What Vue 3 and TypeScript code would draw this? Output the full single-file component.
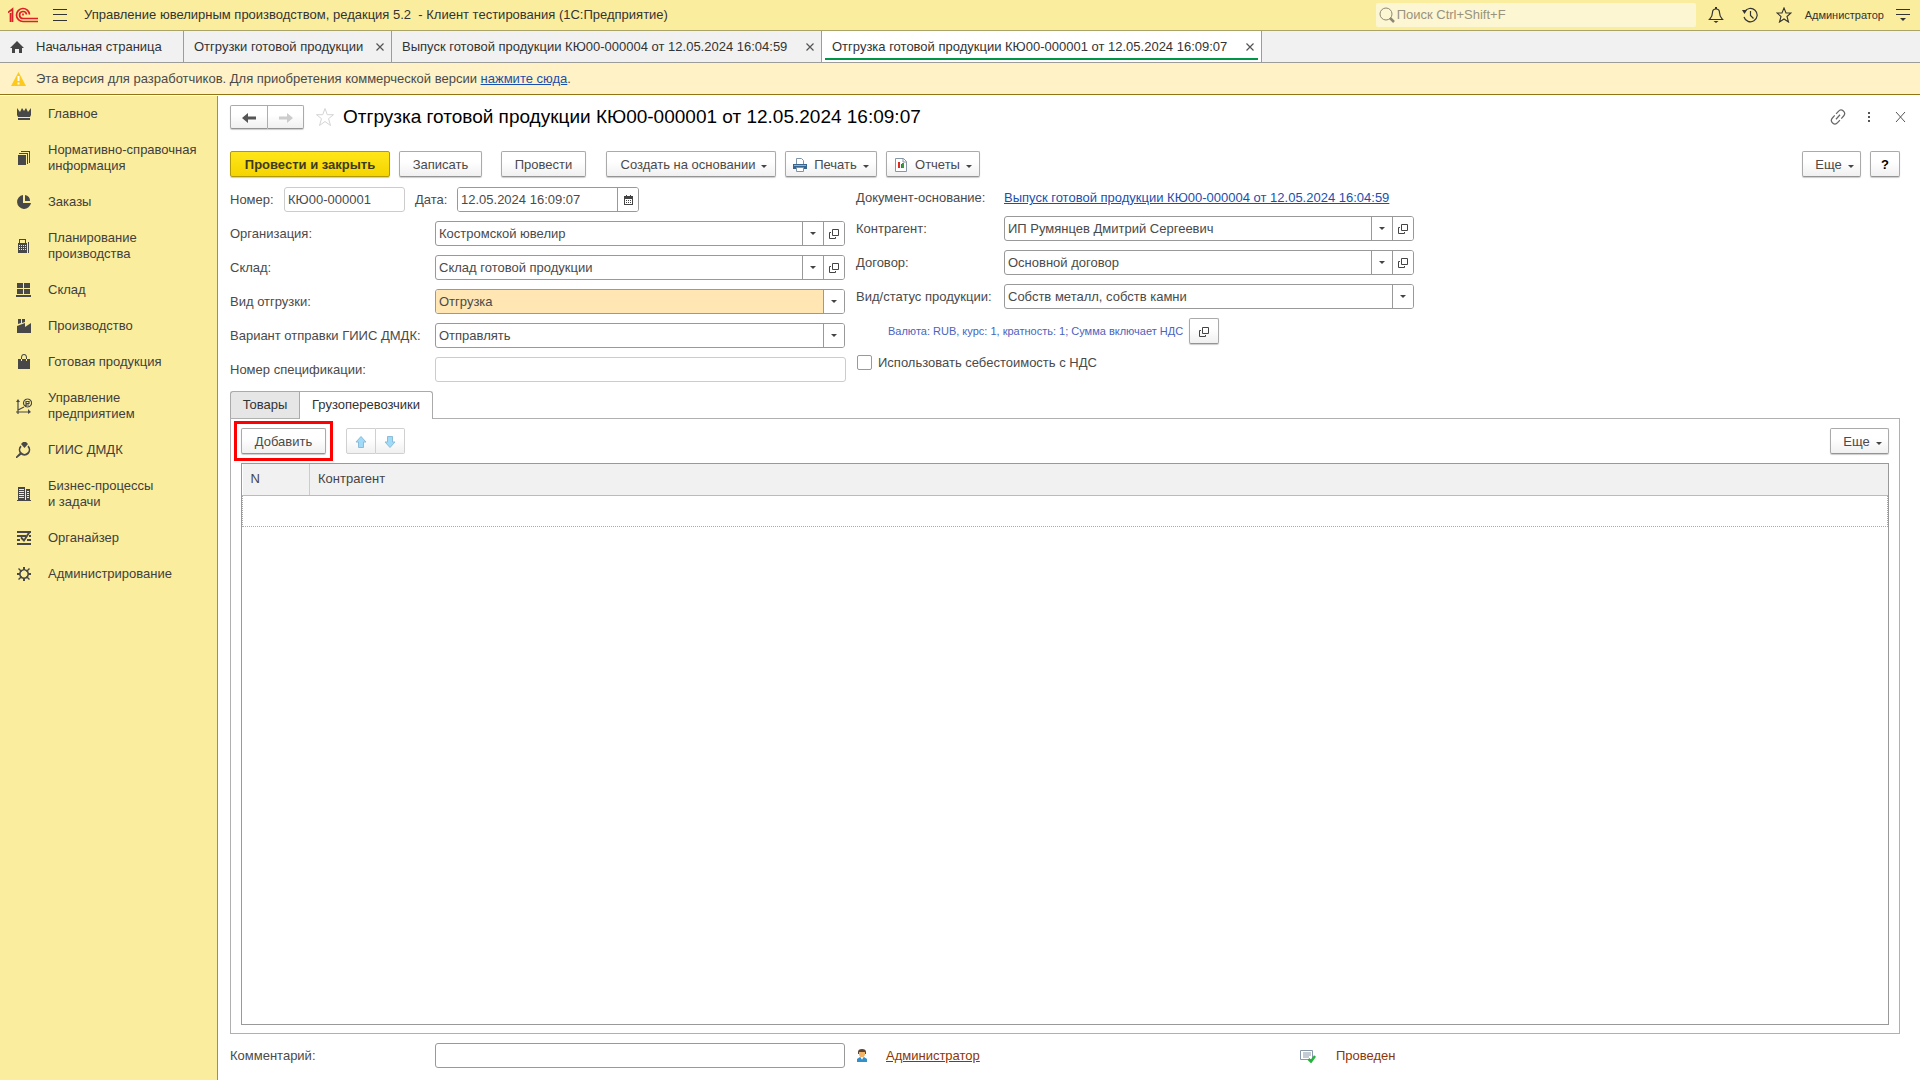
<script setup lang="ts">
import { ref } from 'vue'

interface Section {
  title: string
  fill?: string
  line?: string
}

const sections: Section[] = [
  { title: 'Главное', fill: 'M1 2l3 4 2-4 2 3 2-3 2 4 3-4v7l-1 2H2L1 9zM2 12h12v2H2z' },
  { title: 'Нормативно-справочная\nинформация', fill: 'M2 5h8v10H2zM3 3h9v11h-1V4H3zM5 1h9v12h-1V2H5z' },
  { title: 'Заказы', fill: 'M7 1a7 7 0 1 0 8 8H7zM9 1a6 6 0 0 1 5 6H9z' },
  {
    title: 'Планирование\nпроизводства',
    fill: 'M3 1h7v4h1v10H2V5h1zm1 1v3h5V2zM3 7v1h1V7zm2 0v1h1V7zm2 0v1h1V7zm2 0v1h1V7zM3 9v1h1V9zm2 0v1h1V9zm2 0v1h1V9zm2 0v1h1V9zM3 11v1h1v-1zm2 0v1h1v-1zm2 0v1h1v-1zm2 0v1h1v-1zM12 4h1v11h-1z',
  },
  { title: 'Склад', fill: 'M1 1h6v5H1zM8 1h6v5H8zM1 7h6v5H1zM8 7h6v5H8zM0 13h15v2H0z' },
  { title: 'Производство', fill: 'M2 1h3v4l-3 1zM6 1h3v3L6 5zM1 8l8-3v4l6-4v10H1z' },
  { title: 'Готовая продукция', fill: 'M2 5h12v10H2zM5 4a3 4 0 0 1 6 0v3h-1V4a2 3 0 0 0-4 0v3H5z' },
  {
    title: 'Управление\nпредприятием',
    fill: 'M0 4l2-3 2 3zM12 11l3 3-3 2z',
    line: 'M2 3v11h11M0 14h2v2M2 12l6-3M11.500 1a4 4 0 1 0 .1 0M10 3v5M10 3.500h3v2h-3M10 7h3',
  },
  { title: 'ГИИС ДМДК', fill: 'M5 2l2-2h3l2 2-3.500 4z', line: 'M5 4a5.200 5.200 0 1 0 7 0M5 4.500a4.700 4.700 0 1 0 7 0M5 12l-5 4M4 11.500l-4 4' },
  {
    title: 'Бизнес-процессы\nи задачи',
    fill: 'M2 1h7v13H2zm1 2v1h5V3zm0 2v1h5V5zm0 2v1h5V7zm0 2v1h5V9zm0 2v1h5v-1zM10 3h4v11h-4zm1 2v1h2V5zm0 2v1h2V7zm0 2v1h2V9zm0 2v1h2v-1zM1 14h14v1H1z',
  },
  {
    title: 'Органайзер',
    fill: 'M1 1h14v2H1zM1 5h9v2H1zM13 5h2v2h-2zM1 9h3v2H1zM11 9h4v2h-4zM1 13h14v2H1z',
    line: 'M14 2l-6 9-3-3M13 2l-5 8-3-3',
  },
  {
    title: 'Администрирование',
    fill: 'M7 1h2v3H7zM7 12h2v3H7zM1 7h3v2H1zM12 7h3v2h-3zM2 3l1-1 3 3-1 1zM13 2l1 1-3 3-1-1zM2 13l1 1 3-3-1-1zM14 13l-1 1-3-3 1-1z',
    line: 'M8 3.500a4.500 4.500 0 1 0 .1 0M8 4a4 4 0 1 0 .1 0',
  },
]

const windows = ref([
  { title: 'Отгрузки готовой продукции', width: 208, active: false },
  { title: 'Выпуск готовой продукции КЮ00-000004 от 12.05.2024 16:04:59', width: 430, active: false },
  { title: 'Отгрузка готовой продукции КЮ00-000001 от 12.05.2024 16:09:07', width: 440, active: true },
])

const leftFields = [
  { id: 'org', label: 'Организация:', value: 'Костромской ювелир', open: true, mark: false },
  { id: 'store', label: 'Склад:', value: 'Склад готовой продукции', open: true, mark: false },
  { id: 'kind', label: 'Вид отгрузки:', value: 'Отгрузка', open: false, mark: true },
  { id: 'giis', label: 'Вариант отправки ГИИС ДМДК:', value: 'Отправлять', open: false, mark: false },
]
const rightFields = [
  { id: 'partner', label: 'Контрагент:', value: 'ИП Румянцев Дмитрий Сергеевич', open: true },
  { id: 'contract', label: 'Договор:', value: 'Основной договор', open: true },
  { id: 'status', label: 'Вид/статус продукции:', value: 'Собств металл, собств камни', open: false },
]

const docNumber = ref('КЮ00-000001')
const docDate = ref('12.05.2024 16:09:07')
const spec = ref('')
const comment = ref('')
const withVat = ref(false)
</script>

<template>
  <div class="app">
    <header class="topbar">
      <svg class="logo" viewBox="0 0 30 16" width="30" height="16" aria-label="1С">
        <path d="M0 5.500L4.500 2v13M2.500 6v9M21.500 7.500A6.500 6.500 0 1 0 15 14.500H30M18.500 7.500A3.500 3.500 0 1 0 15 11.500H30M15 8.500v-2" fill="none" stroke="#dd1f26" stroke-width="1.700" />
      </svg>
      <button class="flat burger" aria-label="Меню">
        <svg viewBox="0 0 14 12" width="14" height="12"><path d="M0 .5h14M0 5.500h14M0 11.500h14" stroke="#333" /></svg>
      </button>
      <span class="apptitle">Управление ювелирным производством, редакция 5.2&nbsp; - Клиент тестирования (1С:Предприятие)</span>
      <label class="search">
        <svg viewBox="0 0 16 16" width="16" height="16"><circle cx="7" cy="7" r="6" fill="none" stroke="#8d8874" /><path d="M11 11l4 4" stroke="#8d8874" stroke-width="2.500" /></svg>
        <input type="search" placeholder="Поиск Ctrl+Shift+F" aria-label="Поиск" />
      </label>
      <nav class="tools">
        <button class="flat" aria-label="Оповещения">
          <svg viewBox="0 0 16 16" width="16" height="16"><path d="M1.500 12.500h13c-2-2-3-3-3-7a3.500 3.500 0 0 0-7 0c0 4-1 5-3 7z" fill="none" stroke="#333" stroke-width="1.200" /><path d="M5.500 14h5L8 16zM7 0h2v2H7z" fill="#333" /></svg>
        </button>
        <button class="flat" aria-label="История">
          <svg viewBox="0 0 16 16" width="16" height="16"><path d="M2.500 5a6.700 6.700 0 1 1-.5 5M8.500 4v4.500l3 3" fill="none" stroke="#333" stroke-width="1.200" /><path d="M0 3h5L2.500 7z" fill="#333" /></svg>
        </button>
        <button class="flat" aria-label="Избранное">
          <svg viewBox="0 0 16 16" width="16" height="16"><path d="M8 1l2 5h5l-4 3.500 1.500 5.500L8 12l-4.500 3L5 9.500 1 6h5z" fill="none" stroke="#333" stroke-width="1.100" /></svg>
        </button>
      </nav>
      <span class="user">Администратор</span>
      <button class="flat panelmenu" aria-label="Настройки">
        <svg viewBox="0 0 14 14" width="14" height="14"><path d="M0 1.500h14M0 6.500h14" stroke="#333" /><path d="M4 10h6l-3 3z" fill="#333" /></svg>
      </button>
    </header>

    <nav class="windows">
      <a class="win home" href="#">
        <svg viewBox="0 0 14 12" width="14" height="12"><path d="M7 0l7 7h-2v5H9V8H5v4H2V7H0z" fill="#444" /></svg>
        <span>Начальная страница</span>
      </a>
      <div v-for="w in windows" :key="w.title" class="win" :class="{ active: w.active }" :style="{ minWidth: w.width + 'px' }">
        <a href="#">{{ w.title }}</a>
        <button class="flat" aria-label="Закрыть">
          <svg viewBox="0 0 8 8" width="8" height="8"><path d="M.5.5l7 7M7.500.5l-7 7" stroke="#555" stroke-width="1.200" /></svg>
        </button>
      </div>
    </nav>

    <div class="banner">
      <svg viewBox="0 0 15 14" width="15" height="14"><path d="M7.500 0L15 14H0z" fill="#fcc91c" /><path d="M6.500 4h2v5h-2zM6.500 10.500h2v2h-2z" fill="#fff" /></svg>
      <span>Эта версия для разработчиков. Для приобретения коммерческой версии <a href="#">нажмите сюда</a>.</span>
    </div>

    <div class="body">
      <nav class="sidebar">
        <a v-for="s in sections" :key="s.title" href="#">
          <svg viewBox="0 0 16 16" width="16" height="16">
            <path v-if="s.fill" :d="s.fill" fill="#484848" fill-rule="evenodd" />
            <path v-if="s.line" :d="s.line" fill="none" stroke="#484848" stroke-width="1.200" />
          </svg>
          <span>{{ s.title }}</span>
        </a>
      </nav>

      <main class="doc">
        <div class="dochead">
          <div class="group">
            <button class="btn back" aria-label="Назад">
              <svg viewBox="0 0 14 10" width="14" height="10"><path d="M0 5l6-5v3.500h8v3H6V10z" fill="#555" /></svg>
            </button>
            <button class="btn forward" aria-label="Вперед">
              <svg viewBox="0 0 14 10" width="14" height="10"><path d="M14 5L8 0v3.500H0v3h8V10z" fill="#ccc" /></svg>
            </button>
          </div>
          <button class="flat fav" aria-label="В избранное">
            <svg viewBox="0 0 20 20" width="20" height="20"><path d="M10 1.500l2.300 6.200h6.200l-5 4 2 6.800-5.500-4-5.500 4 2-6.800-5-4h6.200z" fill="none" stroke="#d4d4d4" /></svg>
          </button>
          <h1>Отгрузка готовой продукции КЮ00-000001 от 12.05.2024 16:09:07</h1>
          <div class="corner">
            <button class="flat" aria-label="Ссылка">
              <svg viewBox="0 0 16 16" width="16" height="16"><g fill="none" stroke="#666" stroke-width="1.200" transform="rotate(-48 8 8)"><path d="M7 4.500H3.500a3.500 3.500 0 0 0 0 7H7M9 4.500h3.500a3.500 3.500 0 0 1 0 7H9M5 8h6" /></g></svg>
            </button>
            <button class="flat" aria-label="Действия">
              <svg viewBox="0 0 16 16" width="16" height="16"><path d="M7 3h2v2H7zM7 7h2v2H7zM7 11h2v2H7z" fill="#555" /></svg>
            </button>
            <button class="flat" aria-label="Закрыть">
              <svg viewBox="0 0 16 16" width="16" height="16"><path d="M4 3l9 10M13 3L4 13" stroke="#555" /></svg>
            </button>
          </div>
        </div>

        <div class="toolbar">
          <button class="btn primary">Провести и закрыть</button>
          <button class="btn save">Записать</button>
          <button class="btn post">Провести</button>
          <button class="btn create">Создать на основании<i class="caret"></i></button>
          <button class="btn print">
            <svg viewBox="0 0 14 14" width="14" height="14"><path d="M3.500 6V.5h5l2 2V6" fill="#fff" stroke="#7d93a8" /><path d="M0 6h14v5H0z" fill="#386490" /><path d="M1 7h12v1H1z" fill="#8fb2d2" /><path d="M3.500 9.500h7v4h-7z" fill="#fff" stroke="#7d93a8" /></svg>
            Печать<i class="caret"></i>
          </button>
          <button class="btn reports">
            <svg viewBox="0 0 14 14" width="14" height="14"><path d="M1.500.5h8l3 3v10h-11z" fill="#fff" stroke="#8596a6" /><path d="M9 .5V4h3.500" fill="none" stroke="#8596a6" /><path d="M4 4h2v6H4zM7 6h1v4H7z" fill="#e02b20" /><path d="M8 5h2v5H8z" fill="#3a9a3c" /></svg>
            Отчеты<i class="caret"></i>
          </button>
          <button class="btn more push">Еще<i class="caret"></i></button>
          <button class="btn help" aria-label="Справка">?</button>
        </div>

        <div class="fields">
          <div class="column">
            <div class="numbers">
              <label for="num">Номер:</label>
              <input id="num" v-model="docNumber" class="text pale" type="text" />
              <label for="date">Дата:</label>
              <div class="datebox">
                <input id="date" v-model="docDate" type="text" />
                <button class="cell" aria-label="Календарь">
                  <svg viewBox="0 0 9 10" width="9" height="10"><path d="M0 1h9v9H0zm1 3v5h7V4z" fill="#444" fill-rule="evenodd" /><path d="M2 0h1v2H2zM6 0h1v2H6zM2 5h1v1H2zM4 5h1v1H4zM6 5h1v1H6zM2 7h1v1H2zM4 7h1v1H4zM6 7h1v1H6z" fill="#444" /></svg>
                </button>
              </div>
            </div>
            <div v-for="f in leftFields" :key="f.id" class="row">
              <label :for="f.id">{{ f.label }}</label>
              <div class="combo" :class="{ mark: f.mark }">
                <select :id="f.id"><option>{{ f.value }}</option></select>
                <span class="cell drop"><i class="caret"></i></span>
                <button v-if="f.open" class="cell" aria-label="Открыть">
                  <svg viewBox="0 0 10 10" width="10" height="10"><path d="M3.500.5h6v6h-6zM2 3.500H.5v6h6V8" fill="none" stroke="#444" /></svg>
                </button>
              </div>
            </div>
            <div class="row">
              <label for="spec">Номер спецификации:</label>
              <input id="spec" v-model="spec" class="text pale" type="text" />
            </div>
          </div>

          <div class="column right">
            <div class="row base">
              <span>Документ-основание:</span>
              <a href="#">Выпуск готовой продукции КЮ00-000004 от 12.05.2024 16:04:59</a>
            </div>
            <div v-for="f in rightFields" :key="f.id" class="row">
              <label :for="f.id">{{ f.label }}</label>
              <div class="combo">
                <select :id="f.id"><option>{{ f.value }}</option></select>
                <span class="cell drop"><i class="caret"></i></span>
                <button v-if="f.open" class="cell" aria-label="Открыть">
                  <svg viewBox="0 0 10 10" width="10" height="10"><path d="M3.500.5h6v6h-6zM2 3.500H.5v6h6V8" fill="none" stroke="#444" /></svg>
                </button>
              </div>
            </div>
            <div class="currency">
              <span>Валюта: RUB, курс: 1, кратность: 1; Сумма включает НДС</span>
              <button class="btn square" aria-label="Валюта документа">
                <svg viewBox="0 0 10 10" width="10" height="10"><path d="M3.500.5h6v6h-6zM2 3.500H.5v6h6V8" fill="none" stroke="#444" /></svg>
              </button>
            </div>
            <label class="check"><input v-model="withVat" type="checkbox" />Использовать себестоимость с НДС</label>
          </div>
        </div>

        <div class="tabs">
          <button class="tab goods">Товары</button>
          <button class="tab carriers">Грузоперевозчики</button>
        </div>
        <section class="panel">
          <div class="toolbar">
            <div class="marker"><button class="btn add">Добавить</button></div>
            <div class="group moves">
              <button class="btn" aria-label="Вверх">
                <svg viewBox="0 0 12 12" width="12" height="12"><path d="M6 .5L11 6H8.500v5.500h-5V6H1z" fill="#9fdaf8" stroke="#8cbcd6" /></svg>
              </button>
              <button class="btn" aria-label="Вниз">
                <svg viewBox="0 0 12 12" width="12" height="12"><path d="M6 11.500L1 6h2.500V.5h5V6H11z" fill="#9fdaf8" stroke="#8cbcd6" /></svg>
              </button>
            </div>
            <button class="btn more push">Еще<i class="caret"></i></button>
          </div>
          <div class="grid">
            <table>
              <thead>
                <tr><th class="num">N</th><th>Контрагент</th></tr>
              </thead>
              <tbody>
                <tr><td colspan="2"></td></tr>
              </tbody>
            </table>
          </div>
        </section>

        <footer class="foot">
          <label for="comment">Комментарий:</label>
          <input id="comment" v-model="comment" class="text" type="text" />
          <span class="author">
            <svg viewBox="0 0 10 13" width="10" height="13"><path d="M1 5V3a4 3 0 0 1 8 0v2z" fill="#5a4632" /><path d="M2 3h6v3L6 9H4L2 6z" fill="#f2b366" /><path d="M0 13V10l3-2 2 2 2-2 3 2v3z" fill="#3490c8" /><path d="M4 8h2l-1 3z" fill="#fff" /></svg>
            <a href="#">Администратор</a>
          </span>
          <span class="state">
            <svg viewBox="0 0 16 14" width="16" height="14"><path d="M.5 1.500h12v9H.5z" fill="#fff" stroke="#8798ab" /><path d="M3 4h8M3 6h8M3 8h6" stroke="#8798ab" /><path d="M8.500 10l2.500 2.500L15 7" fill="none" stroke="#26b33c" stroke-width="2.500" /></svg>
            Проведен
          </span>
        </footer>
      </main>
    </div>
  </div>
</template>

<style>
body { margin: 0; }
</style>

<style scoped>
* { box-sizing: border-box; }
.app {
  display: flex;
  flex-direction: column;
  min-height: 100vh;
  background: #fff;
  color: #4a4a4a;
  font: 13px/16px "Liberation Sans", Arial, sans-serif;
}
button, input, select { font: inherit; color: inherit; margin: 0; padding: 0; }
svg { display: block; flex: none; }
.flat { border: 0; background: none; display: flex; align-items: center; justify-content: center; }
a { color: #1a4fae; }

.topbar {
  display: flex;
  align-items: center;
  height: 31px;
  padding: 0 10px 0 8px;
  background: #fbed9e;
  border-bottom: 1px solid #aaa468;
  color: #333;
}
.burger { margin: 0 16px 0 15px; }
.apptitle { flex: 1; white-space: nowrap; padding-left: 1px; }
.search {
  display: flex;
  align-items: center;
  gap: 2px;
  width: 320px;
  height: 24px;
  padding-left: 3px;
  background: #fdf6d3;
  border-radius: 2px;
}
.search input { flex: 1; min-width: 0; border: 0; background: none; outline: 0; }
.search input::placeholder { color: #98937c; }
.tools { display: flex; gap: 18px; margin: 0 13px 0 12px; }
.user { font-size: 11px; }
.panelmenu { margin-left: 12px; }

.windows { display: flex; height: 32px; background: #f1f1f1; border-bottom: 1px solid #9c9c98; }
.win { display: flex; align-items: center; justify-content: space-between; gap: 8px; padding: 0 7px 0 10px; border-right: 1px solid #9c9c9c; color: #333; white-space: nowrap; text-decoration: none; }
.win a { color: #333; text-decoration: none; }
.home { justify-content: flex-start; min-width: 184px; gap: 12px; }
.active.win { background: linear-gradient(#009646, #009646) center bottom 2px / calc(100% - 6px) 2px no-repeat #fff; }

.banner { display: flex; align-items: center; gap: 10px; height: 32px; padding-left: 11px; background: #fef2c6; border-bottom: 1px solid #927412; }

.body { flex: 1; display: flex; padding-top: 1px; }
.sidebar { width: 218px; flex: none; background: #fbed9e; border-right: 1px solid #94906c; }
.sidebar a { display: flex; align-items: center; gap: 16px; padding: 10px 0 10px 16px; color: #404040; text-decoration: none; white-space: pre-line; }
.doc { flex: 1; min-width: 0; display: flex; flex-direction: column; padding: 9px 20px 12px 12px; }

.btn {
  display: flex;
  align-items: center;
  justify-content: center;
  height: 26px;
  padding-top: 1px;
  border: 1px solid #aaa;
  border-bottom-color: #949494;
  border-radius: 2px;
  background: linear-gradient(#fff 40%, #f0f0f0);
  box-shadow: 0 1px 1px #ccc;
  white-space: nowrap;
}
.group { display: flex; }
.group .btn:first-child { border-radius: 2px 0 0 2px; }
.group .btn + .btn { border-left: 0; border-radius: 0 2px 2px 0; }
.caret { width: 0; border: 3px solid transparent; border-top-color: #444; border-bottom: 0; }
.btn .caret { margin: 3px 0 0 6px; }

.dochead { display: flex; align-items: center; height: 24px; margin-bottom: 22px; }
.dochead .btn { height: 24px; }
.back { width: 38px; }
.forward { width: 36px; }
.fav { margin: 0 8px 0 11px; }
h1 { flex: 1; margin: 0; font-size: 19px; line-height: 24px; font-weight: 400; color: #000; white-space: nowrap; }
.corner { display: flex; gap: 15px; margin-right: -8px; }

.toolbar { display: flex; gap: 9px; }
.primary { width: 160px; background: linear-gradient(#ffe61a, #f5d400); border-color: #b09a08; font-weight: 700; color: #3d3a20; }
.save { width: 83px; }
.post { width: 85px; margin: 0 11px 0 10px; }
.create { width: 170px; padding-left: 6px; }
.print { width: 92px; }
.reports { width: 94px; }
.print svg, .reports svg { margin-right: 7px; }
.more { width: 59px; padding-left: 6px; }
.push { margin-left: auto; }
.help { width: 30px; color: #000; font-weight: 700; }

.fields { display: grid; grid-template-columns: minmax(0, 616px) minmax(0, 558px); gap: 10px; margin: 10px 0 9px; }
.column { display: flex; flex-direction: column; gap: 9px; }
.row { display: grid; grid-template-columns: 205px minmax(0, 1fr); align-items: center; white-space: nowrap; }
.right .row { grid-template-columns: 148px minmax(0, 1fr); }
.right .base { height: 20px; padding-top: 2px; }
.numbers { display: flex; align-items: center; }
.numbers label { width: 54px; }
.numbers .text { width: 121px; margin-right: 10px; }
.numbers .text + label { width: 42px; }
.text { width: 100%; height: 25px; padding: 0 3px; border: 1px solid #999; border-radius: 3px; background: #fff; }
.pale { border-color: #ccc; }
.datebox, .combo { height: 25px; border: 1px solid #999; border-radius: 3px; background: #fff; overflow: hidden; }
.datebox { display: flex; width: 182px; }
.datebox input { flex: 1; min-width: 0; border: 0; padding: 0 3px; }
.cell { display: flex; align-items: center; justify-content: center; width: 21px; border: 0; border-left: 1px solid #999; background: #fff; }
.combo { display: grid; grid-template-columns: minmax(0, 1fr) 21px auto; }
.row .combo { margin-right: 1px; }
.right .row .combo { margin-right: 0; }
.combo select { grid-area: 1 / 1 / 2 / 3; appearance: none; border: 0; padding: 0 24px 0 3px; background: transparent; }
.mark select { background: #ffe6b3; }
.drop { grid-area: 1 / 2; pointer-events: none; }
.currency { display: flex; align-items: center; gap: 6px; padding-left: 32px; color: #4a63c0; font-size: 11px; }
.square { width: 30px; }
.check { display: flex; align-items: center; gap: 6px; height: 19px; }
.check input { appearance: none; width: 15px; height: 15px; margin-left: 1px; border: 1px solid #999; border-radius: 2px; background: #fff; }

.tabs { display: flex; }
.tab { height: 27px; border: 1px solid #aaa; border-bottom: 0; background: #e6e6e6; color: #333; }
.goods { width: 69px; border-right: 0; border-radius: 3px 0 0 0; }
.carriers { width: 134px; height: 28px; margin-bottom: -1px; padding-bottom: 2px; border-radius: 0 3px 0 0; background: #fff; z-index: 1; }
.panel { flex: 1; display: flex; flex-direction: column; gap: 9px; padding: 9px 10px 8px; border: 1px solid #b0b0b0; }
.marker { outline: 3px solid #f00; outline-offset: 4px; }
.add { width: 85px; }
.moves { margin-left: 11px; }
.moves .btn { width: 30px; border-color: #d0d0d0; box-shadow: none; }
.moves .btn + .btn { width: 29px; }
.grid { flex: 1; border: 1px solid #999; }
table { width: 100%; border-collapse: collapse; table-layout: fixed; }
th { height: 31px; padding: 0 8px; background: #f1f1f1; border-bottom: 1px solid #bbb; font-weight: 400; text-align: left; color: #444; }
.num { width: 67px; border-right: 1px solid #ccc; }
td { height: 31px; border: 1px dotted #aaa; border-top: 0; }

.foot { display: grid; grid-template-columns: 205px minmax(0, 410px) 443px auto; justify-content: start; align-items: center; margin-top: 9px; }
.foot a, .state { color: #8c3608; }
.author { display: flex; align-items: center; gap: 19px; padding-left: 12px; }
.state { display: flex; align-items: center; gap: 20px; padding-left: 12px; }
</style>
